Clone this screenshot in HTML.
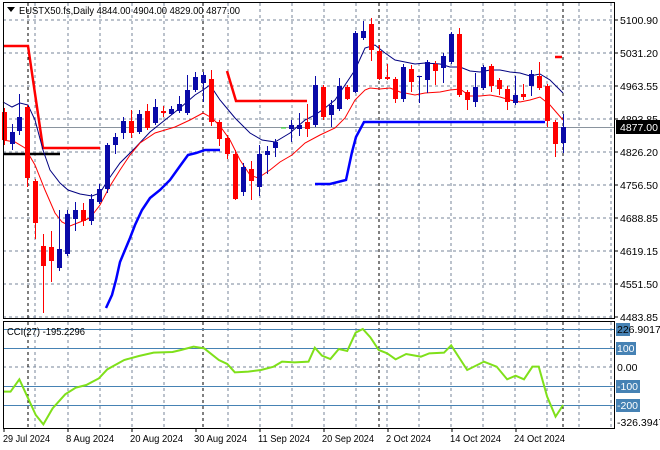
<!DOCTYPE html>
<html><head><meta charset="utf-8"><style>
html,body{margin:0;padding:0;background:#fff;}
svg{display:block;font-family:"Liberation Sans",sans-serif;}
</style></head><body>
<svg width="660" height="450" viewBox="0 0 660 450" xmlns="http://www.w3.org/2000/svg">
<rect width="660" height="450" fill="#fff"/>
<g stroke="#77869a" stroke-width="1" stroke-dasharray="3,3" fill="none">
<path d="M3 20H614M3 53H614M3 86H614M3 119H614M3 152H614M3 185H614M3 218H614M3 251H614M3 284H614M3 317H614"/>
<path d="M35 3V318M68 3V318M100 3V318M132 3V318M164 3V318M228 3V318M260 3V318M292 3V318M324 3V318M356 3V318M387 3V318M419 3V318M451 3V318M483 3V318M515 3V318M547 3V318M579 3V318M611 3V318"/>
<path d="M35 322V428M68 322V428M100 322V428M132 322V428M164 322V428M228 322V428M260 322V428M292 322V428M324 322V428M356 322V428M387 322V428M419 322V428M451 322V428M483 322V428M515 322V428M547 322V428M579 322V428M611 322V428"/>
<path d="M3 367H614"/>
</g>
<g stroke="#000" stroke-width="1" stroke-dasharray="3,3">
<path d="M28 3V318M203 3V318M379 3V318M563 3V318M28 322V428M203 322V428M379 322V428M563 322V428"/>
</g>
<path d="M3 127.5H614" stroke="#8a949e" stroke-width="1"/>
<g fill="none" stroke-width="2.5">
<polyline stroke="#ff0000" points="3,46 28,46 43,148 100,148"/>
<polyline stroke="#ff0000" points="227,71 236,101 307,101"/>
<polyline stroke="#ff0000" points="555,57 562,57"/>
<polyline stroke="#000" points="3,154 60,154"/>
<polyline stroke="#0000ff" points="106,308 112,295 116,280 120,262 125,250 130,238 135,225 142,210 150,198 160,190 170,180 180,166 188,155 196,153 205,150 220,150"/>
<polyline stroke="#0000ff" points="315,184 330,184 346,180 352,152 356,137 364,122 545,122"/>
</g>
<polyline fill="none" stroke="#000080" stroke-width="1" points="3,102 12,107 20,103 28,105 35,120 43,150 50,170 60,183 68,190 80,194 92,196 100,193 108,180 120,163 135,148 150,132 165,120 180,108 195,95 203,90 210,85 220,100 235,118 250,133 262,140 275,142 290,133 305,120 315,115 325,108 335,100 345,85 355,70 365,48 375,45 385,53 395,60 405,62 415,64 425,63 440,64 450,67 460,67 470,71 480,72 490,70 500,70 510,72 520,73 530,76 540,74 550,80 563,93"/>
<polyline fill="none" stroke="#ff0000" stroke-width="1" points="3,140 15,142 25,148 35,165 45,190 55,213 62,222 70,226 80,222 90,218 100,205 110,186 120,170 130,155 140,143 155,133 175,127 190,120 203,113 212,118 220,126 230,140 240,160 250,175 258,178 270,170 280,162 292,155 305,143 320,135 335,128 345,118 355,100 365,90 370,88 380,89 390,88 400,92 415,95 425,93 440,92 450,90 460,89 470,96 480,96 490,95 500,97 510,100 520,102 530,100 540,97 550,105 563,120"/>
<g stroke="#ff0000" stroke-width="1">
<path d="M4.5 108V145M27.5 105V187M35.5 179V239M43.5 234V313M51.5 231V282M83.5 203V226M131.5 110V138M147.5 104V130M163.5 106V117M211.5 70V126M219.5 120V146M227.5 135V159M235.5 150V200M251.5 161V200M307.5 104V137M323.5 85V120M347.5 85V100M371.5 18V61M379.5 45V80M387.5 64V80M395.5 77V103M411.5 65V92M435.5 61V85M459.5 28V97M467.5 90V110M491.5 64V92M499.5 78V95M507.5 86V110M523.5 84V100M539.5 62V90M547.5 84V127M555.5 120V157"/>
</g>
<g fill="#ff0000">
<rect x="2" y="112" width="5" height="28"/><rect x="25" y="107" width="5" height="71"/><rect x="33" y="181" width="5" height="42"/><rect x="41" y="246" width="5" height="20"/><rect x="49" y="247" width="5" height="14"/><rect x="81" y="210" width="5" height="11"/><rect x="129" y="121" width="5" height="12"/><rect x="145" y="111" width="5" height="17"/><rect x="161" y="111" width="5" height="2"/><rect x="209" y="79" width="5" height="43"/><rect x="217" y="122" width="5" height="17"/><rect x="225" y="138" width="5" height="16"/><rect x="233" y="154" width="5" height="45"/><rect x="249" y="169" width="5" height="12"/><rect x="305" y="122" width="5" height="7"/><rect x="321" y="87" width="5" height="30"/><rect x="345" y="87" width="5" height="12"/><rect x="369" y="24" width="5" height="26"/><rect x="377" y="51" width="5" height="28"/><rect x="385" y="77" width="5" height="2"/><rect x="393" y="79" width="5" height="20"/><rect x="409" y="69" width="5" height="13"/><rect x="433" y="64" width="5" height="7"/><rect x="457" y="34" width="5" height="61"/><rect x="465" y="92" width="5" height="8"/><rect x="489" y="66" width="5" height="20"/><rect x="497" y="80" width="5" height="9"/><rect x="505" y="89" width="5" height="13"/><rect x="521" y="94" width="5" height="3"/><rect x="537" y="76" width="5" height="12"/><rect x="545" y="86" width="5" height="35"/><rect x="553" y="122" width="5" height="22"/>
</g>
<g stroke="#0a0aa8" stroke-width="1">
<path d="M12.5 124V150M19.5 94V135M59.5 210V271M67.5 210V256M75.5 202V231M91.5 194V225M99.5 184V204M107.5 143V193M115.5 133V154M123.5 117V139M139.5 110V134M155.5 99V125M171.5 106V115M179.5 96V113M187.5 75V115M195.5 72V92M203.5 72V102M243.5 163V196M259.5 145V196M267.5 146V174M275.5 139V157M291.5 120V142M299.5 113V136M315.5 76V127M331.5 100V127M339.5 78V111M355.5 31V93M363.5 21V40M403.5 64V102M419.5 76V103M427.5 60V93M443.5 53V83M451.5 32V64M475.5 73V107M483.5 65V90M515.5 76V105M531.5 70V96M563.5 114V153"/>
</g>
<g fill="#0a0aa8">
<rect x="10" y="132" width="5" height="12"/><rect x="17" y="117" width="5" height="14"/><rect x="57" y="249" width="5" height="19"/><rect x="65" y="214" width="5" height="40"/><rect x="73" y="210" width="5" height="9"/><rect x="89" y="199" width="5" height="22"/><rect x="97" y="189" width="5" height="13"/><rect x="105" y="145" width="5" height="44"/><rect x="113" y="137" width="5" height="8"/><rect x="121" y="121" width="5" height="12"/><rect x="137" y="114" width="5" height="18"/><rect x="153" y="107" width="5" height="16"/><rect x="169" y="109" width="5" height="5"/><rect x="177" y="104" width="5" height="7"/><rect x="185" y="90" width="5" height="23"/><rect x="193" y="77" width="5" height="13"/><rect x="201" y="75" width="5" height="8"/><rect x="241" y="167" width="5" height="25"/><rect x="257" y="154" width="5" height="33"/><rect x="265" y="151" width="5" height="4"/><rect x="273" y="142" width="5" height="6"/><rect x="289" y="125" width="5" height="4"/><rect x="297" y="125" width="5" height="4"/><rect x="313" y="85" width="5" height="40"/><rect x="329" y="105" width="5" height="10"/><rect x="337" y="86" width="5" height="23"/><rect x="353" y="33" width="5" height="59"/><rect x="361" y="31" width="5" height="7"/><rect x="401" y="67" width="5" height="32"/><rect x="417" y="76" width="5" height="1"/><rect x="425" y="62" width="5" height="18"/><rect x="441" y="56" width="5" height="12"/><rect x="449" y="34" width="5" height="28"/><rect x="473" y="87" width="5" height="15"/><rect x="481" y="67" width="5" height="21"/><rect x="513" y="95" width="5" height="8"/><rect x="529" y="74" width="5" height="12"/><rect x="561" y="127" width="5" height="16"/>
</g>
<path d="M281 128H286" stroke="#22dd22" stroke-width="1"/>
<g stroke="#4682b4" stroke-width="1">
<path d="M3 329.5H614M3 348.5H614M3 386.5H614M3 405.5H614"/>
</g>
<polyline fill="none" stroke="#7fe01a" stroke-width="2" transform="translate(0,300) scale(0.42088,0.33333)" vector-effect="non-scaling-stroke" points="8,275 25,275 46,238 65,290 85,345 103,373 125,325 155,283 180,263 205,255 235,235 255,208 295,180 330,168 365,158 410,156 430,150 460,140 485,145 520,180 540,192 558,217 590,215 620,210 650,200 670,185 700,187 733,185 748,143 765,167 785,177 805,147 825,153 845,98 862,87 880,112 900,150 920,160 940,178 965,162 1000,170 1020,160 1055,158 1072,136 1110,210 1150,185 1180,200 1205,238 1225,227 1245,238 1265,200 1280,200 1300,290 1320,350 1338,315"/>
<g fill="none" stroke="#000" stroke-width="1">
<rect x="3.5" y="2.5" width="611" height="316"/>
<rect x="3.5" y="321.5" width="611" height="107"/>
</g>
<path d="M7 7H15L11 12Z" fill="#000"/>
<text x="19" y="14" font-size="10.5" fill="#000" textLength="221" lengthAdjust="spacingAndGlyphs">EUSTX50.fs,Daily  4844.00 4904.00 4829.00 4877.00</text>
<text x="7" y="335" font-size="10.5" fill="#000" textLength="78" lengthAdjust="spacingAndGlyphs">CCI(27) -195.2296</text>
<g font-size="10.5" fill="#000">
<path d="M614 20H618M614 53H618M614 86H618M614 119H618M614 152H618M614 185H618M614 218H618M614 251H618M614 284H618M614 317H618" stroke="#000"/>
<text x="620" y="24">5100.90</text>
<text x="620" y="57">5031.20</text>
<text x="620" y="90">4963.55</text>
<text x="620" y="123">4893.85</text>
<text x="620" y="156">4826.20</text>
<text x="620" y="189">4756.50</text>
<text x="620" y="222">4688.85</text>
<text x="620" y="255">4619.15</text>
<text x="620" y="288">4551.50</text>
<text x="620" y="321">4483.85</text>
</g>
<rect x="616" y="120" width="44" height="14" fill="#000"/>
<text x="620" y="131" font-size="10.5" fill="#fff">4877.00</text>
<rect x="616" y="323" width="14" height="13" fill="#4682b4"/>
<rect x="616" y="342" width="20" height="13" fill="#4682b4"/>
<rect x="616" y="380" width="24" height="13" fill="#4682b4"/>
<rect x="616" y="399" width="24" height="13" fill="#4682b4"/>
<g font-size="10.5">
<text x="617" y="333" fill="#000">226.9017</text>
<text x="617" y="352" fill="#fff">100</text>
<text x="617" y="371" fill="#000">0.00</text>
<text x="617" y="390" fill="#fff">-100</text>
<text x="617" y="409" fill="#fff">-200</text>
<text x="617" y="426" fill="#000">-326.3947</text>
</g>
<g font-size="10.5" fill="#000" lengthAdjust="spacingAndGlyphs">
<path d="M4 428V432M68 428V432M132 428V432M196 428V432M260 428V432M324 428V432M388 428V432M452 428V432M516 428V432" stroke="#000"/>
<text x="3" y="442" textLength="47" lengthAdjust="spacingAndGlyphs">29 Jul 2024</text>
<text x="66" y="442" textLength="48" lengthAdjust="spacingAndGlyphs">8 Aug 2024</text>
<text x="130" y="442" textLength="53" lengthAdjust="spacingAndGlyphs">20 Aug 2024</text>
<text x="194" y="442" textLength="53" lengthAdjust="spacingAndGlyphs">30 Aug 2024</text>
<text x="258" y="442" textLength="52" lengthAdjust="spacingAndGlyphs">11 Sep 2024</text>
<text x="322" y="442" textLength="52" lengthAdjust="spacingAndGlyphs">20 Sep 2024</text>
<text x="386" y="442" textLength="45" lengthAdjust="spacingAndGlyphs">2 Oct 2024</text>
<text x="450" y="442" textLength="51" lengthAdjust="spacingAndGlyphs">14 Oct 2024</text>
<text x="514" y="442" textLength="51" lengthAdjust="spacingAndGlyphs">24 Oct 2024</text>
</g>
</svg>
</body></html>
